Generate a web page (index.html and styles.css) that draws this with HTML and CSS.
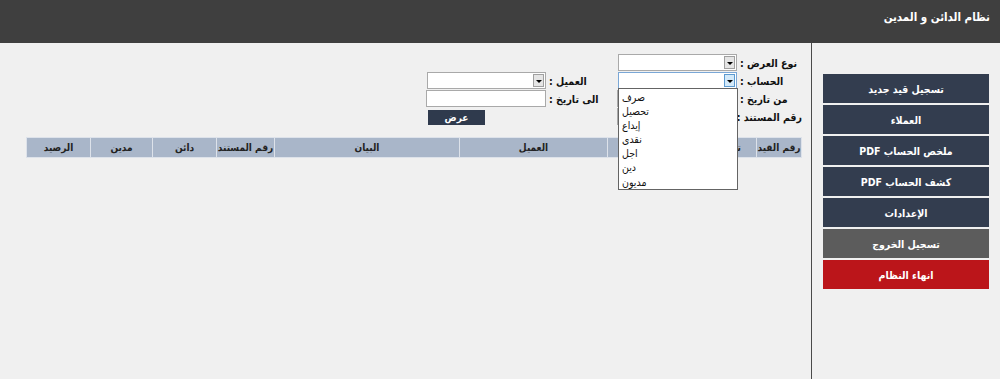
FILE: index.html
```html
<!DOCTYPE html>
<html lang="ar" dir="rtl">
<head>
    <meta charset="UTF-8">
    <title>نظام الدائن و المدين</title>
    <link rel="stylesheet" href="styles.css">
</head>
<body>
    <header class="topbar">
        <h1 class="title">نظام الدائن و المدين</h1>
    </header>

    <div class="layout">
        <!-- Side menu -->
        <aside class="sidebar">
            <button class="menu-btn">تسجيل قيد جديد</button>
            <button class="menu-btn">العملاء</button>
            <button class="menu-btn">ملخص الحساب PDF</button>
            <button class="menu-btn">كشف الحساب PDF</button>
            <button class="menu-btn">الإعدادات</button>
            <button class="menu-btn logout-btn">تسجيل الخروج</button>
            <button class="menu-btn exit-btn">انهاء النظام</button>
        </aside>

        <main class="content">
            <!-- Filters -->
            <div class="filters">
                <div class="filter-col main-col">
                    <div class="field">
                        <label>نوع العرض :</label>
                        <div class="combo"><span class="combo-arrow"></span></div>
                    </div>
                    <div class="field">
                        <label>الحساب :</label>
                        <div class="combo focused">
                            <span class="combo-arrow"></span>
                            <ul class="combo-list">
                                <li>صرف</li>
                                <li>تحصيل</li>
                                <li>إيداع</li>
                                <li>نقدى</li>
                                <li>اجل</li>
                                <li>دين</li>
                                <li>مديون</li>
                            </ul>
                        </div>
                    </div>
                    <div class="field">
                        <label>من تاريخ :</label>
                        <input class="text-input" type="text">
                    </div>
                    <div class="field">
                        <label>رقم المستند :</label>
                        <input class="text-input" type="text">
                    </div>
                </div>

                <div class="filter-col side-col">
                    <div class="field">
                        <label>العميل :</label>
                        <div class="combo"><span class="combo-arrow"></span></div>
                    </div>
                    <div class="field">
                        <label>الى تاريخ :</label>
                        <input class="text-input" type="text">
                    </div>
                    <div class="field">
                        <label></label>
                        <div class="btn-cell"><button class="show-btn">عرض</button></div>
                    </div>
                </div>
            </div>

            <!-- Records -->
            <table class="ledger">
                <thead>
                    <tr>
                        <th class="c-no">رقم القيد</th>
                        <th class="c-date">تاريخ القيد</th>
                        <th class="c-client">العميل</th>
                        <th class="c-desc">البيان</th>
                        <th class="c-doc">رقم المستند</th>
                        <th class="c-amt">دائن</th>
                        <th class="c-amt2">مدين</th>
                        <th class="c-amt">الرصيد</th>
                    </tr>
                </thead>
                <tbody></tbody>
            </table>
        </main>
    </div>
</body>
</html>
```

FILE: styles.css
```css
body {
    margin: 0;
    font-family: "DejaVu Sans Condensed", "DejaVu Sans", sans-serif;
    background-color: #f0f0f0;
    color: #111;
}

.topbar {
    height: 43px;
    background-color: #3f3f3f;
    padding-right: 10px;
    box-sizing: border-box;
}

.title {
    margin: 0;
    padding-top: 10px;
    font-size: 11.5px;
    font-weight: bold;
    color: #fff;
}

.layout {
    display: flex;
    min-height: calc(100vh - 43px);
}

.sidebar {
    width: 189px;
    box-sizing: border-box;
    border-left: 1px solid #4a4a4a;
    padding: 31px 11px 0 12px;
    display: flex;
    flex-direction: column;
    gap: 2px;
}

.menu-btn {
    height: 29px;
    width: 166px;
    border: none;
    background-color: #333d4f;
    color: #fff;
    font-family: "DejaVu Sans Condensed", "DejaVu Sans", sans-serif;
    font-size: 10.5px;
    font-weight: bold;
    cursor: pointer;
}

.logout-btn {
    background-color: #5c5c5c;
}

.exit-btn {
    background-color: #bb151a;
}

.content {
    flex: 1;
    padding: 11px 9px 0 0;
}

.filters {
    display: flex;
    gap: 18px;
}

.filter-col {
    display: flex;
    flex-direction: column;
    gap: 1px;
}

.side-col {
    padding-top: 18px;
}

.field {
    display: flex;
    align-items: center;
    gap: 3px;
    height: 17px;
}

.field label {
    font-size: 10.5px;
    font-weight: bold;
    text-align: left;
    white-space: nowrap;
}

.main-col label {
    width: 62px;
}

.side-col label {
    width: 50px;
}

.combo {
    position: relative;
    direction: ltr;
    width: 119px;
    height: 17px;
    box-sizing: border-box;
    background: #fff;
    border: 1px solid #a9a9a9;
}

.combo-arrow {
    position: absolute;
    right: 1px;
    top: 1px;
    width: 11px;
    height: 13px;
    background: #e5e5e5;
    border: 1px solid #a0a0a0;
    box-sizing: border-box;
}

.combo-arrow::after {
    content: "";
    position: absolute;
    left: 2px;
    top: 5px;
    border-left: 3px solid transparent;
    border-right: 3px solid transparent;
    border-top: 3px solid #000;
}

.focused {
    border-color: #7aa7d6;
}

.focused .combo-arrow {
    background: #d3e9f9;
    border-color: #5c9ad0;
}

.combo-list {
    position: absolute;
    top: 15px;
    left: -1px;
    width: 120px;
    margin: 0;
    padding: 1px 0 0;
    list-style: none;
    background: #fff;
    border: 1px solid #646464;
    box-sizing: border-box;
    z-index: 5;
}

.combo-list li {
    height: 14.1px;
    line-height: 14px;
    padding-left: 3px;
    font-size: 10.5px;
    text-align: left;
}

.text-input {
    width: 120px;
    height: 17px;
    box-sizing: border-box;
    border: 1px solid #a9a9a9;
    background: #fff;
    padding: 0;
    margin: 0;
}

.btn-cell {
    width: 120px;
    height: 17px;
    display: flex;
    justify-content: flex-end;
    align-items: flex-end;
}

.show-btn {
    width: 57px;
    height: 15px;
    margin-left: 2px;
    border: none;
    background-color: #2f3a4d;
    color: #fff;
    font-family: "DejaVu Sans Condensed", "DejaVu Sans", sans-serif;
    font-size: 10px;
    font-weight: bold;
    padding: 0;
}

.ledger {
    margin-top: 12px;
    width: 776px;
    border-collapse: collapse;
    table-layout: fixed;
}

.ledger th {
    height: 19px;
    padding: 0;
    background-color: #a9b6c9;
    border: 1px solid #dde2ea;
    color: #222;
    font-size: 10px;
    font-weight: bold;
    text-align: center;
    white-space: nowrap;
    overflow: hidden;
}

.c-no { width: 44px; }
.ledger .c-date { text-align: right; padding-right: 15px; }
.c-client { width: 147px; }
.c-desc { width: 184px; }
.c-doc { width: 57px; }
.c-amt { width: 63px; }
.c-amt2 { width: 61px; }
```
